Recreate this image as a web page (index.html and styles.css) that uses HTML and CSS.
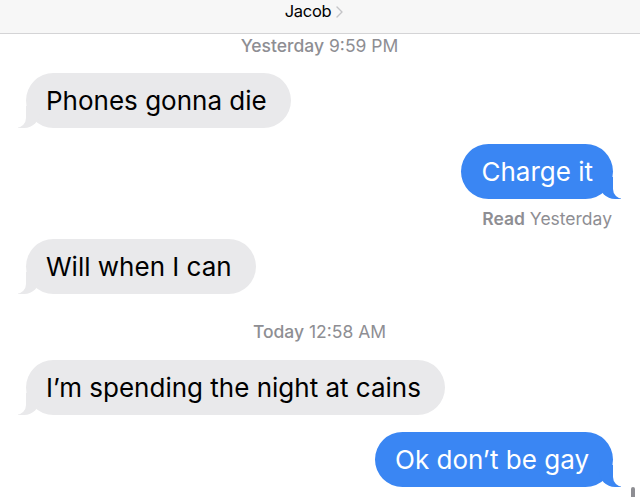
FILE: index.html
```html
<!DOCTYPE html>
<html lang="en">
<head>
  <meta charset="UTF-8" />
  <meta name="viewport" content="width=device-width, initial-scale=1.0" />
  <title>Jacob</title>
  <link rel="stylesheet" href="styles.css">
</head>
<body>
  <div class="header">
    <span class="name">Jacob</span>
    <svg class="chevron" width="7" height="12" viewBox="0 0 7 12"><path d="M1 1l5 5-5 5" fill="none" stroke="#c4c4c7" stroke-width="1.4" stroke-linecap="round" stroke-linejoin="round"/></svg>
  </div>

  <div class="chat">
    <div class="stamp"><b>Yesterday</b> 9:59 PM</div>

    <div class="bubble in b1">Phones gonna die</div>
    <div class="bubble out b2">Charge it</div>
    <div class="receipt"><b>Read</b> Yesterday</div>
    <div class="bubble in b3">Will when I can</div>

    <div class="stamp today"><b>Today</b> 12:58 AM</div>

    <div class="bubble in b4">I’m spending the night at cains</div>
    <div class="bubble out b5">Ok don’t be gay</div>
  </div>

  <div class="scrollbar"></div>
</body>
</html>
```

FILE: styles.css
```css
body {
  margin: 0;
  background: #fff;
  font-family: Inter, "Noto Sans", sans-serif;
  color: #000;
  height: 497px;
  overflow: hidden;
  position: relative;
}
.header {
  height: 33px;
  background: #f7f7f7;
  border-bottom: 1px solid #d4d4d6;
  display: flex;
  align-items: center;
  justify-content: center;
  gap: 5px;
  padding-right: 12px;
}
.name {
  font-size: 16.5px;
  letter-spacing: -0.3px;
  margin-top: -11px;
}
.chevron {
  margin-top: -10px;
}
.chat {
  display: flex;
  flex-direction: column;
  padding: 0 27px 0 26px;
}
.stamp {
  text-align: center;
  font-size: 17.5px;
  line-height: 24px;
  color: #8e8e93;
}
.stamp b {
  font-weight: 500;
}
.receipt b {
  font-weight: 600;
}
.stamp.today {
  margin-top: 26px;
}
.receipt {
  align-self: flex-end;
  font-size: 17.5px;
  line-height: 20px;
  color: #8e8e93;
  margin-top: 10px;
  margin-right: 1px;
}
.bubble {
  position: relative;
  height: 55px;
  line-height: 55px;
  padding: 0 24px 0 20px;
  border-radius: 28px;
  font-size: 26px;
  max-width: 75%;
}
.bubble.in {
  align-self: flex-start;
  background: #e9e9eb;
  color: #000;
}
.bubble.out {
  align-self: flex-end;
  background: #3a86f3;
  color: #fff;
}
.bubble.b2 {
  padding-right: 20px;
}
.bubble::before,
.bubble::after {
  content: "";
  position: absolute;
  bottom: 0;
  height: 22px;
}
.bubble.in::before {
  left: -8px;
  width: 22px;
  background: #e9e9eb;
  border-bottom-right-radius: 16px;
}
.bubble.in::after {
  left: -12px;
  width: 12px;
  background: #fff;
  border-bottom-right-radius: 10px;
}
.bubble.out::before {
  right: -8px;
  width: 22px;
  background: #3a86f3;
  border-bottom-left-radius: 16px;
}
.bubble.out::after {
  right: -12px;
  width: 12px;
  background: #fff;
  border-bottom-left-radius: 10px;
}
.b1 { margin-top: 15px; }
.b2 { margin-top: 16px; }
.b3 { margin-top: 10px; }
.b4 { margin-top: 16px; }
.b5 { margin-top: 17px; }
.scrollbar {
  position: absolute;
  right: 5px;
  bottom: -4px;
  width: 4px;
  height: 14px;
  border-radius: 2px;
  background: #8e8e93;
}
```
